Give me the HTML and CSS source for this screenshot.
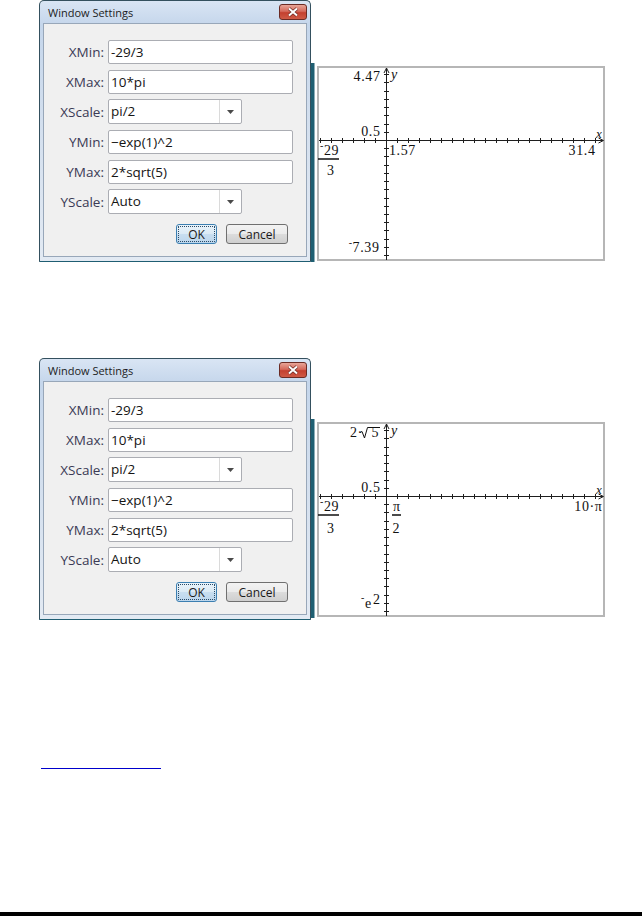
FILE: index.html
```html
<!DOCTYPE html>
<html lang="en">
<head>
<meta charset="utf-8">
<title>Window Settings</title>
<link rel="stylesheet" href="styles.css">
</head>
<body>
<div class="page">

  <div class="figure">
    <div class="dialog">
      <div class="titlebar">
        <span class="title">Window Settings</span>
        <span class="close"><svg width="14" height="10" viewBox="0 0 14 10"><path class="x-shadow" d="M3 1.5L11 8.5M11 1.5L3 8.5"/><path class="x-mark" d="M3 1.5L11 8.5M11 1.5L3 8.5"/></svg></span>
      </div>
      <div class="panel">
        <div class="form">
          <span class="lbl">XMin:</span><span class="field">-29/3</span>
          <span class="lbl">XMax:</span><span class="field">10*pi</span>
          <span class="lbl">XScale:</span><span class="combo"><span class="combo-val">pi/2</span><span class="combo-btn"><svg width="7" height="4" viewBox="0 0 7 4"><path d="M0 0H7L3.5 4Z"/></svg></span></span>
          <span class="lbl">YMin:</span><span class="field">&minus;exp(1)^2</span>
          <span class="lbl">YMax:</span><span class="field">2*sqrt(5)</span>
          <span class="lbl">YScale:</span><span class="combo"><span class="combo-val">Auto</span><span class="combo-btn"><svg width="7" height="4" viewBox="0 0 7 4"><path d="M0 0H7L3.5 4Z"/></svg></span></span>
        </div>
        <div class="buttons">
          <span class="btn btn-ok">OK</span>
          <span class="btn btn-cancel">Cancel</span>
        </div>
      </div>
    </div>

    <svg class="graph" width="295" height="201" viewBox="0 0 295 201">
      <rect class="edge" x="0" y="1" width="3.5" height="199"/>
      <rect class="frame" x="7" y="5" width="286" height="193"/>
      <path class="axis" d="M75.5 6V198M8 78.5H292"/>
      <path class="axis" d="M73 11L75.5 6L78 11M287.5 76L292.5 78.5L287.5 81"/>
      <path class="axis" d="M9.5 76v5M20.5 76v5M31.5 76v5M42.5 76v5M53.5 76v5M64.5 76v5M86.5 76v5M97.5 76v5M108.5 76v5M119.5 76v5M130.5 76v5M141.5 76v5M152.5 76v5M163.5 76v5M174.5 76v5M185.5 76v5M196.5 76v5M207.5 76v5M218.5 76v5M229.5 76v5M240.5 76v5M251.5 76v5M262.5 76v5M273.5 76v5M284.5 76v5"/>
      <path class="axis" d="M73 12.5h5M73 20.5h5M73 29.5h5M73 37.5h5M73 45.5h5M73 53.5h5M73 62.5h5M73 70.5h5M73 86.5h5M73 94.5h5M73 103.5h5M73 111.5h5M73 119.5h5M73 127.5h5M73 136.5h5M73 144.5h5M73 152.5h5M73 160.5h5M73 168.5h5M73 177.5h5M73 185.5h5M73 193.5h5"/>
      <path class="fbar" d="M7 97H28"/>
      <text class="gl" x="69.5" y="18.5" text-anchor="end">4.47</text>
      <text class="gl gi" x="80" y="17">y</text>
      <text class="gl" x="69.5" y="74" text-anchor="end">0.5</text>
      <text class="gl gi gs" x="285" y="76">x</text>
      <text class="gl" x="9" y="93"><tspan class="gm" dy="-6">-</tspan><tspan dy="6">29</tspan></text>
      <text class="gl" x="16" y="113">3</text>
      <text class="gl" x="78" y="93">1.57</text>
      <text class="gl" x="284.5" y="93" text-anchor="end">31.4</text>
      <text class="gl" x="68.5" y="190" text-anchor="end"><tspan class="gm" dy="-6">-</tspan><tspan dy="6">7.39</tspan></text>
    </svg>
  </div>

  <div class="figure figure-second">
    <div class="dialog">
      <div class="titlebar">
        <span class="title">Window Settings</span>
        <span class="close"><svg width="14" height="10" viewBox="0 0 14 10"><path class="x-shadow" d="M3 1.5L11 8.5M11 1.5L3 8.5"/><path class="x-mark" d="M3 1.5L11 8.5M11 1.5L3 8.5"/></svg></span>
      </div>
      <div class="panel">
        <div class="form">
          <span class="lbl">XMin:</span><span class="field">-29/3</span>
          <span class="lbl">XMax:</span><span class="field">10*pi</span>
          <span class="lbl">XScale:</span><span class="combo"><span class="combo-val">pi/2</span><span class="combo-btn"><svg width="7" height="4" viewBox="0 0 7 4"><path d="M0 0H7L3.5 4Z"/></svg></span></span>
          <span class="lbl">YMin:</span><span class="field">&minus;exp(1)^2</span>
          <span class="lbl">YMax:</span><span class="field">2*sqrt(5)</span>
          <span class="lbl">YScale:</span><span class="combo"><span class="combo-val">Auto</span><span class="combo-btn"><svg width="7" height="4" viewBox="0 0 7 4"><path d="M0 0H7L3.5 4Z"/></svg></span></span>
        </div>
        <div class="buttons">
          <span class="btn btn-ok">OK</span>
          <span class="btn btn-cancel">Cancel</span>
        </div>
      </div>
    </div>

    <svg class="graph graph-second" width="295" height="201" viewBox="0 0 295 201">
      <rect class="edge" x="0" y="1" width="3.5" height="199"/>
      <rect class="frame" x="7" y="5" width="286" height="193"/>
      <path class="axis" d="M75.5 6V198M8 78.5H292"/>
      <path class="axis" d="M73 11L75.5 6L78 11M287.5 76L292.5 78.5L287.5 81"/>
      <path class="axis" d="M9.5 76v5M20.5 76v5M31.5 76v5M42.5 76v5M53.5 76v5M64.5 76v5M86.5 76v5M97.5 76v5M108.5 76v5M119.5 76v5M130.5 76v5M141.5 76v5M152.5 76v5M163.5 76v5M174.5 76v5M185.5 76v5M196.5 76v5M207.5 76v5M218.5 76v5M229.5 76v5M240.5 76v5M251.5 76v5M262.5 76v5M273.5 76v5M284.5 76v5"/>
      <path class="axis" d="M73 12.5h5M73 20.5h5M73 29.5h5M73 37.5h5M73 45.5h5M73 53.5h5M73 62.5h5M73 70.5h5M73 86.5h5M73 94.5h5M73 103.5h5M73 111.5h5M73 119.5h5M73 127.5h5M73 136.5h5M73 144.5h5M73 152.5h5M73 160.5h5M73 168.5h5M73 177.5h5M73 185.5h5M73 193.5h5"/>
      <path class="fbar" d="M7 97H28M81 97H90"/>
      <path class="rad" d="M49 14.5L51 13.5L53.5 20L56.5 9.5H69"/>
      <text class="gl" x="39" y="19">2·</text>
      <text class="gl" x="60.5" y="19">5</text>
      <text class="gl gi" x="80" y="17">y</text>
      <text class="gl" x="69.5" y="74" text-anchor="end">0.5</text>
      <text class="gl gi gs" x="285" y="76">x</text>
      <text class="gl" x="9" y="93"><tspan class="gm" dy="-6">-</tspan><tspan dy="6">29</tspan></text>
      <text class="gl" x="16" y="115">3</text>
      <text class="gl" x="82" y="93">π</text>
      <text class="gl" x="81.5" y="115">2</text>
      <text class="gl" x="291.5" y="93" text-anchor="end">10·π</text>
      <text class="gl gm" x="50" y="183">-</text>
      <text class="gl" x="54" y="190">e</text>
      <text class="gl" x="62" y="186">2</text>
    </svg>
  </div>

  <div class="footnote-rule"></div>
  <div class="page-end"></div>
</div>
</body>
</html>
```

FILE: styles.css
```css
* {
  box-sizing: border-box;
}

body {
  margin: 0;
  background: #ffffff;
  font-family: "Open Sans", "Noto Sans", sans-serif;
}

.page {
  width: 642px;
  height: 916px;
  display: flex;
  flex-direction: column;
}

.figure {
  display: flex;
  align-items: flex-start;
  padding-left: 39px;
}

.figure-second {
  margin-top: 95px;
}

/* ---------- dialog ---------- */

.dialog {
  width: 272px;
  height: 262px;
  border: 1px solid #34505e;
  border-bottom-color: #1f5e72;
  border-radius: 5px 5px 1px 1px;
  padding: 0 3px 4px;
  background: linear-gradient(#d9e5f4 0px, #c5d6eb 24px, #d3dfee 120px, #e3eaf3 100%);
  display: flex;
  flex-direction: column;
}

.titlebar {
  height: 22px;
  display: flex;
  align-items: center;
  justify-content: space-between;
  padding-left: 5px;
}

.title {
  font-size: 11px;
  color: #1c1c1c;
}

.close {
  width: 28px;
  height: 16px;
  border: 1px solid #6b2b24;
  border-radius: 3px;
  background: linear-gradient(#e8a598 0%, #d56a5c 45%, #c4402f 55%, #cf5a45 100%);
  display: flex;
  align-items: center;
  justify-content: center;
}

.x-shadow {
  stroke: #6b2b24;
  stroke-width: 3.4;
  fill: none;
}

.x-mark {
  stroke: #ffffff;
  stroke-width: 2;
  fill: none;
}

.panel {
  flex: 1;
  border: 1px solid #98a7b9;
  background: #f0f0f0;
  padding: 16px 18px 0 0;
  display: flex;
  flex-direction: column;
}

.form {
  display: grid;
  grid-template-columns: 60px 185px;
  grid-auto-rows: 24px;
  column-gap: 4px;
  row-gap: 6px;
}

.lbl {
  text-align: right;
  font-size: 13.5px;
  line-height: 24px;
  color: #3b3a55;
}

.field {
  border: 1px solid #abadb3;
  border-radius: 2px;
  background: #ffffff;
  font-size: 13.5px;
  line-height: 22px;
  padding-left: 2px;
  color: #141414;
  white-space: nowrap;
}

.combo {
  width: 134px;
  height: 25px;
  margin-top: -1px;
  border: 1px solid #abadb3;
  border-radius: 2px;
  background: #ffffff;
  display: flex;
  font-size: 13.5px;
  color: #141414;
}

.combo-val {
  flex: 1;
  line-height: 23px;
  padding-left: 2px;
}

.combo-btn {
  width: 22px;
  border-left: 1px solid #dadada;
  display: flex;
  align-items: center;
  justify-content: center;
}

.combo-btn path {
  fill: #4a4a4a;
}

.buttons {
  display: flex;
  justify-content: flex-end;
  gap: 9px;
  margin-top: 10px;
}

.btn {
  height: 20px;
  border: 1px solid #707070;
  border-radius: 3px;
  background: linear-gradient(#f3f3f3 0%, #ebebeb 48%, #dcdcdc 52%, #cfcfcf 100%);
  font-size: 12px;
  color: #1a1a1a;
  display: flex;
  align-items: center;
  justify-content: center;
}

.btn-ok {
  width: 41px;
  border-color: #3c7fb1;
  background: linear-gradient(#e9f3fa 0%, #dbeaf5 48%, #c8def0 52%, #bcd6ec 100%);
  outline: 1px dotted #2a4a66;
  outline-offset: -3px;
}

.btn-cancel {
  width: 62px;
}

/* ---------- graph ---------- */

.graph {
  display: block;
  margin-top: 62px;
}

.graph-second {
  margin-top: 60px;
}

.edge {
  fill: #1f5f72;
}

.frame {
  fill: #ffffff;
  stroke: #b6b6b6;
  stroke-width: 2;
}

.axis {
  fill: none;
  stroke: #1e1e1e;
  stroke-width: 1;
}

.fbar {
  fill: none;
  stroke: #111111;
  stroke-width: 1.5;
}

.rad {
  fill: none;
  stroke: #111111;
  stroke-width: 1;
}

.gl {
  font-family: "Liberation Serif", serif;
  font-size: 14px;
  letter-spacing: 0.6px;
  fill: #111111;
}

.gi {
  font-style: italic;
  letter-spacing: 0;
}

.gs {
  font-size: 13px;
}

.gm {
  font-size: 10px;
}

/* ---------- page furniture ---------- */

.footnote-rule {
  margin-top: 148px;
  margin-left: 41px;
  width: 120px;
  height: 1px;
  background: #0000cc;
}

.page-end {
  margin-top: auto;
  height: 4px;
  background: #000000;
}
```
